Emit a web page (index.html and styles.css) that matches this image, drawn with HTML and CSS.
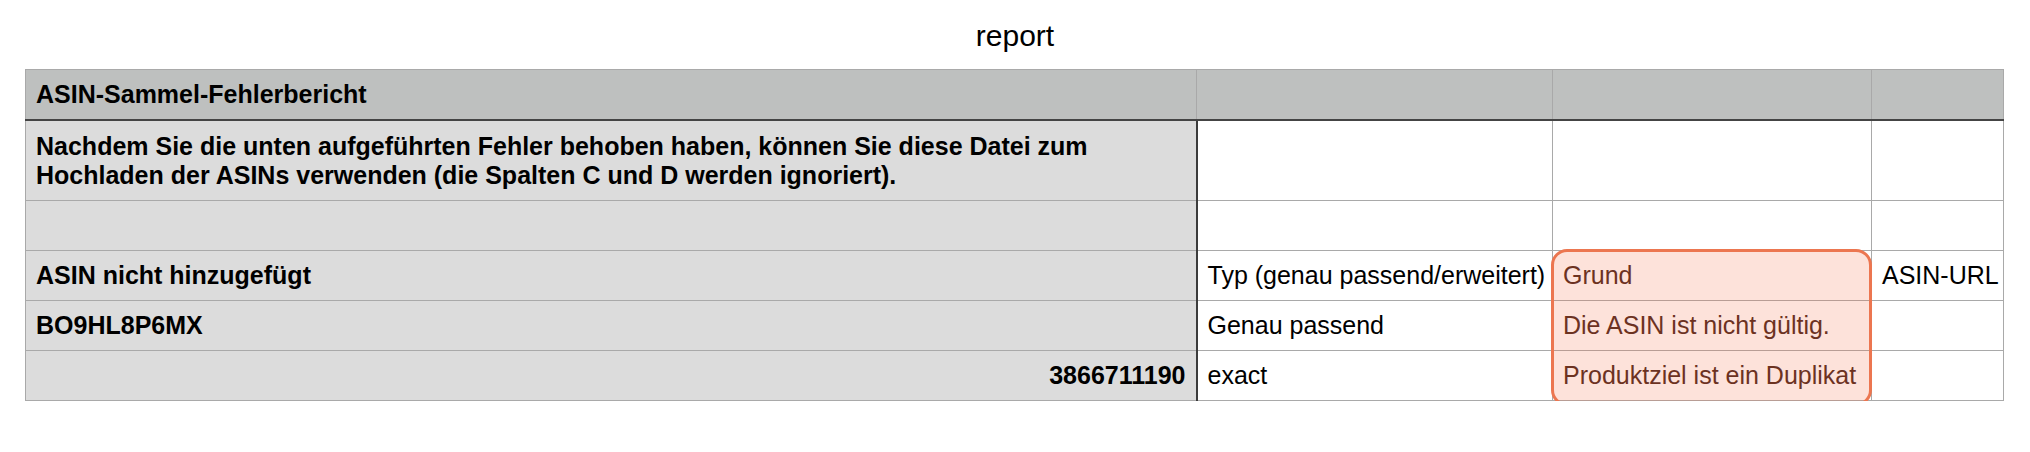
FILE: index.html
```html
<!DOCTYPE html>
<html lang="de">
<head>
<meta charset="utf-8">
<title>report</title>
<link rel="stylesheet" href="styles.css">
</head>
<body>
<div class="page">
  <h1 class="title">report</h1>
  <div class="sheet">
    <table class="grid">
      <colgroup>
        <col class="col-a">
        <col class="col-b">
        <col class="col-c">
        <col class="col-d">
      </colgroup>
      <tr class="row-head">
        <th class="key">ASIN-Sammel-Fehlerbericht</th>
        <th></th>
        <th></th>
        <th></th>
      </tr>
      <tr class="row-note">
        <th class="key">Nachdem Sie die unten aufgeführten Fehler behoben haben, können Sie diese Datei zum<br>Hochladen der ASINs verwenden (die Spalten C und D werden ignoriert).</th>
        <td></td>
        <td></td>
        <td></td>
      </tr>
      <tr class="row">
        <th class="key"></th>
        <td></td>
        <td></td>
        <td></td>
      </tr>
      <tr class="row">
        <th class="key">ASIN nicht hinzugefügt</th>
        <td>Typ (genau passend/erweitert)</td>
        <td class="flag">Grund</td>
        <td>ASIN-URL</td>
      </tr>
      <tr class="row">
        <th class="key">BO9HL8P6MX</th>
        <td>Genau passend</td>
        <td class="flag">Die ASIN ist nicht gültig.</td>
        <td></td>
      </tr>
      <tr class="row">
        <th class="key num">3866711190</th>
        <td>exact</td>
        <td class="flag">Produktziel ist ein Duplikat</td>
        <td></td>
      </tr>
    </table>
    <div class="highlight"></div>
  </div>
</div>
</body>
</html>
```

FILE: styles.css
```css
html, body {
  margin: 0;
  padding: 0;
  background: #ffffff;
}

.page {
  font-family: "Liberation Sans", Arial, sans-serif;
  color: #000;
}

.title {
  margin: 0;
  height: 69px;
  box-sizing: border-box;
  padding-top: 18px;
  font-size: 30px;
  line-height: 36px;
  font-weight: normal;
  text-align: center;
}

.sheet {
  position: relative;
  margin-left: 25px;
  width: 1978px;
}

.grid {
  width: 1978px;
  table-layout: fixed;
  border-collapse: collapse;
  font-size: 25px;
}

.col-a { width: 1171px; }
.col-b { width: 356px; }
.col-c { width: 319px; }
.col-d { width: 132px; }

.grid th,
.grid td {
  border: 1px solid #a9a9a9;
  padding: 0 10px;
  text-align: left;
  vertical-align: middle;
  white-space: nowrap;
  font-weight: normal;
  line-height: 29px;
}

.grid .key {
  font-weight: bold;
  background: #dcdcdc;
  border-right: 2px solid #3c3c3c;
}

.grid .num {
  text-align: right;
}

.row-head th {
  height: 49px;
  background: #bec0bf;
  border-bottom: 2px solid #444444;
}

.row-head th.key {
  background: #bec0bf;
  border-right: 1px solid #a9a9a9;
}

.row-note th,
.row-note td {
  height: 79px;
}

.row th,
.row td {
  height: 49px;
}

.grid .flag {
  color: #4a2417;
}

.highlight {
  position: absolute;
  left: 1526px;
  top: 180px;
  width: 321px;
  height: 157px;
  box-sizing: border-box;
  border: 3px solid #ec7650;
  border-radius: 16px;
  background: rgba(245, 110, 70, 0.2);
}
```
